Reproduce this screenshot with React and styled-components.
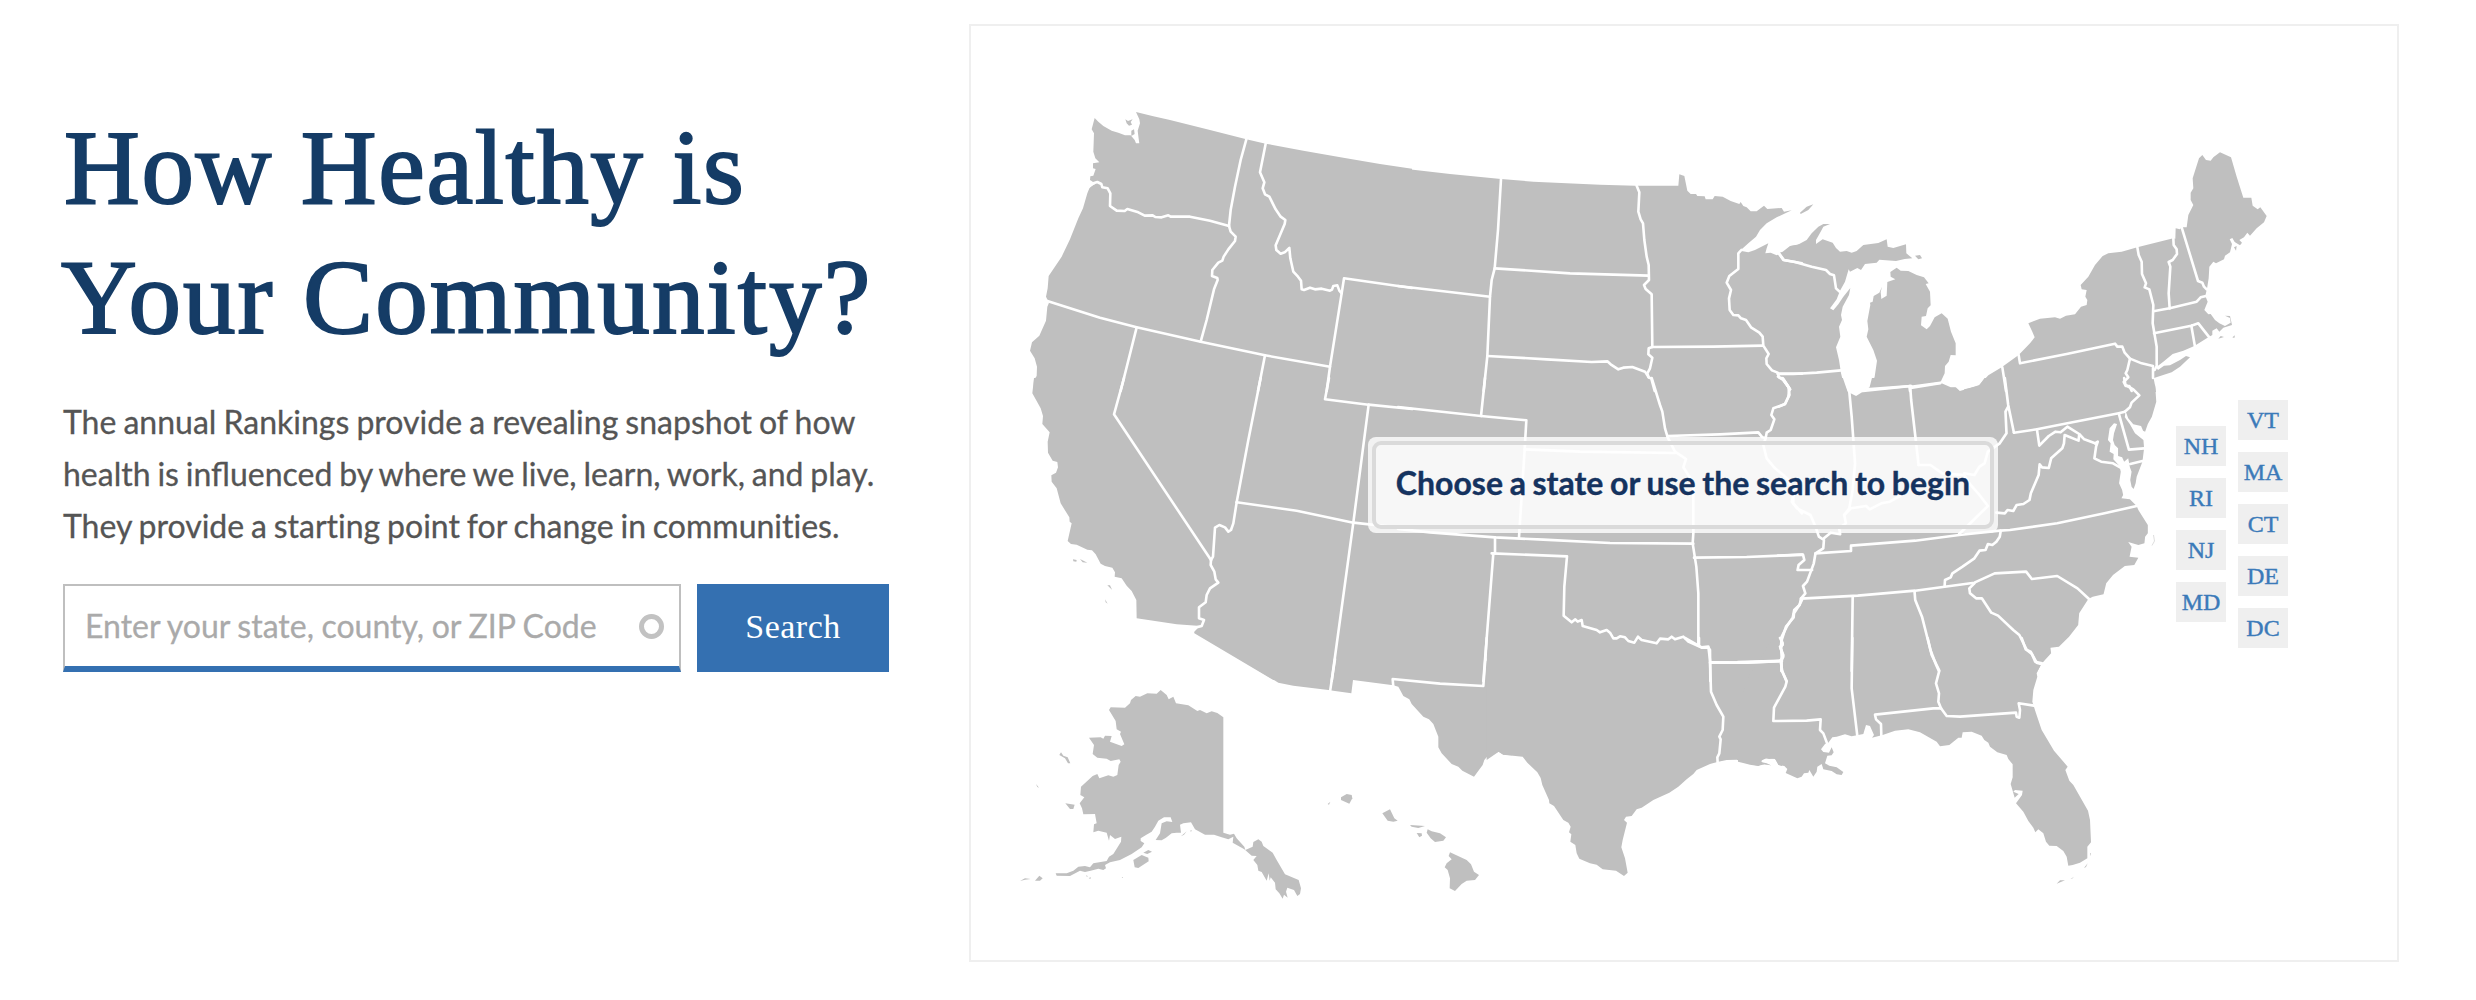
import React from 'react';
import styled, { createGlobalStyle } from 'styled-components';

const GlobalStyle = createGlobalStyle`
  * { box-sizing: border-box; }
  body { margin: 0; background: #fff; }
`;

const sans = "Lato, 'Open Sans', sans-serif";
const serif = "'Liberation Serif', 'Times New Roman', serif";

const Page = styled.main`
  display: flex;
  align-items: flex-start;
  width: 2476px;
  height: 1000px;
  overflow: hidden;
  background: #fff;
`;

const Intro = styled.section`
  flex: none;
  width: 906px;
  margin: 103px 0 0 63px;
`;

const Title = styled.h1`
  margin: 0;
  font: 400 105px/130px ${serif};
  color: #153c66;
  -webkit-text-stroke: 2px #153c66;
  white-space: nowrap;
`;

const TitleLine = styled.span`
  display: block;
  margin-left: ${(p) => p.$shift || 0}px;
  letter-spacing: ${(p) => p.$track || 0}px;
`;

const Lead = styled.p`
  margin: 33px 0 0;
  font: 400 32px/52px ${sans};
  color: #555;
  -webkit-text-stroke: 0.3px #555;
  white-space: nowrap;
`;

const LeadLine = styled.span`
  display: block;
  word-spacing: ${(p) => p.$gap || 0}px;
  font-variant-ligatures: ${(p) => (p.$plain ? 'none' : 'normal')};
`;

const SearchForm = styled.form`
  display: flex;
  gap: 16px;
  margin-top: 32px;
`;

const Field = styled.label`
  display: flex;
  align-items: center;
  justify-content: space-between;
  width: 618px;
  height: 88px;
  padding: 0 15px 0 20px;
  border: 2px solid #bfbfbf;
  border-bottom: 6px solid #3470b1;
  background: #fff;
`;

const Input = styled.input`
  width: 540px;
  padding: 0;
  border: 0;
  outline: 0;
  background: none;
  font: 400 32px/44px ${sans};
  color: #555;
  word-spacing: -0.6px;
  &::placeholder {
    color: #aaa;
    opacity: 1;
    -webkit-text-stroke: 0.3px #aaa;
  }
`;

const Ring = styled.span`
  width: 25px;
  height: 25px;
  border: 5px solid #c2c2c2;
  border-radius: 50%;
`;

const Submit = styled.button`
  width: 192px;
  height: 88px;
  padding: 0 0 2px;
  border: 0;
  background: #3470b1;
  color: #fff;
  font: 400 34px/1 ${serif};
  letter-spacing: 0.5px;
`;

const MapPanel = styled.section`
  position: relative;
  flex: none;
  width: 1430px;
  height: 938px;
  margin-top: 24px;
  border: 2px solid #efefef;
`;

const MapSvg = styled.svg`
  display: block;
  width: 1426px;
  height: 934px;
`;

const Hint = styled.div`
  position: absolute;
  left: 397px;
  top: 411px;
  width: 630px;
  height: 96px;
  padding: 4px;
  border-radius: 8px;
  background: rgba(255, 255, 255, 0.8);
`;

const HintInner = styled.div`
  display: flex;
  align-items: center;
  justify-content: center;
  height: 100%;
  padding-bottom: 4px;
  border: 4px solid #dadada;
  border-radius: 9px;
  background: rgba(255, 255, 255, 0.4);
  font: 700 32px/40px ${sans};
  word-spacing: -1.1px;
  color: #15335f;
  -webkit-text-stroke: 0.4px #15335f;
  white-space: nowrap;
`;

const SmallStates = styled.nav`
  position: absolute;
  left: 1205px;
  top: 374px;
  display: flex;
  gap: 12px;
`;

const StateColumn = styled.div`
  display: flex;
  flex-direction: column;
  gap: 12px;
  padding-top: ${(p) => p.$drop || 0}px;
`;

const StateLink = styled.a`
  width: 50px;
  height: 40px;
  background: #efefef;
  color: #3b7ab9;
  font: 400 24px/41px ${serif};
  -webkit-text-stroke: 0.4px #3b7ab9;
  text-align: center;
`;

// The map is split into sheets. Each has its own origin on the page and is
// drawn at three units to the pixel (kx differs on the mid-Atlantic sheet).
const sheets = [
  {
    x: 1010, y: 90,
    land: [
      'M254,84 265,95 280,108 305,122 325,128 345,136 362,136 374,150 378,160 388,160 386,146 383,122 390,100 388,88 378,66 430,79 480,90 600,120 709,148 767,161 880,182 1000,203 1110,222 1206,236 V906 H70 L72,870 80,858 81,830 74,805 60,782 66,757 88,737 108,692 112,650 117,638 108,620 113,595 116,558 155,500 180,448 205,385 219,355 232,310 240,290 256,282 246,274 240,270 241,259 250,257 257,237 249,235 249,220 268,217 256,205 250,185 252,130 245,118Z',
      'M346,88 354,93 368,88 362,96 366,104 357,107 350,100Z', 'M364,122 372,118 374,132 364,138Z',
    ],
    borders: [
      '236,291 250,280 262,276 274,282 277,292 293,295 301,310 300,348 320,362 344,363 352,357 385,367 404,377 428,376 436,381 455,382 475,376 482,380 540,380 600,392 657,408',
      '709,148 692,210 675,290 662,360 657,408',
      '657,408 662,425 677,440 675,453 655,478 641,500 637,512 625,518 607,540 606,558 622,564 623,570 612,598 590,690 572,755',
      '767,161 750,247 763,277 758,295 765,313 778,320 797,358 812,380 826,390 824,402 797,466 799,480 812,491 824,487 838,474 841,505 850,545 864,560 873,572 875,598 882,600 900,593 915,598 935,596 960,602 966,599 970,588 982,586 988,602 995,610',
      '1206,594 1002,565 995,610 960,830 950,903',
      '112,633 270,683 380,712 572,755 765,796 960,830', '380,712 332,903', '765,796 744,903',
    ],
  },
  {
    x: 1400, y: 90,
    land: ['M-6,234 150,252 303,267 400,275 500,280 600,284 705,287 835,287 838,253 853,258 862,302 872,312 888,312 892,318 914,319 917,328 938,328 944,318 968,320 992,333 1018,342 1022,336 1030,348 1040,352 1052,364 1070,364 1092,347 1102,357 1145,354 1152,365 1175,361 1130,382 1100,400 1080,420 1068,440 1045,460 1020,482 1045,487 1065,480 1105,460 1100,475 1096,490 1112,488 1130,496 1155,484 1172,468 1206,461 V906 H-6Z'],
    borders: [
      '-6,588 130,604 270,620', '303,267 294,420 284,535 275,570 270,620 262,798 251,903',
      '284,535 510,550 745,557',
      '710,287 718,307 715,365 722,388 729,400 733,450 740,500 746,525 747,570 732,585 737,597 755,613 757,770',
      '757,771 940,770 1088,767',
      '262,798 440,808 575,816 622,814 632,823 655,838 670,833 697,831 735,845 746,862 754,866 764,903',
      '757,771 746,775 745,793 757,803 750,835 742,850 746,862',
      '1024,480 1015,490 1015,537 988,558 980,578 993,600 987,625 989,660 1000,675 1015,676 1023,685 1038,690 1053,712 1078,728 1088,740 1090,767 1106,792 1099,805 1100,822 1116,841 1133,848 1137,862 1150,870 1170,898',
      '1133,851 1206,851', '1137,490 1152,510 1206,520',
    ],
  },
  {
    x: 1780, y: 90,
    land: [
      'M-6,490 8,485 30,468 52,465 80,450 95,430 115,410 130,402 150,402 130,410 122,425 108,450 108,462 128,448 158,458 168,474 180,485 200,483 215,488 230,483 250,465 295,459 320,448 323,470 340,474 378,463 379,490 397,505 374,507 348,513 298,509 290,518 255,522 243,540 232,534 210,545 206,538 195,575 180,602 170,628 158,644 150,655 160,661 175,643 190,620 211,594 207,615 188,650 183,675 186,690 177,710 181,740 168,772 177,810 183,850 188,870 202,906 H-6Z',
      'M405,497 420,495 426,505 415,508Z', 'M60,368 80,350 100,343 85,360 62,372Z',
      'M350,533 362,542 385,543 410,555 432,562 446,580 437,582 450,605 452,646 443,655 438,678 425,680 423,706 440,718 450,708 464,682 485,670 503,686 513,725 527,760 527,796 512,795 506,815 495,828 494,850 480,880 500,894 525,893 535,906 H262 L273,890 284,860 291,812 280,780 260,740 265,718 262,693 271,645 270,638 278,635 281,618 298,608 306,590 302,606 304,627 320,617 322,576 346,568 332,560 331,546Z',
      'M548,906 553,898 595,888 625,856 665,832 716,795 750,760 764,742 757,725 745,700 780,686 825,682 840,686 858,677 885,673 903,650 920,645 922,630 916,620 920,600 905,598 902,585 925,560 945,525 968,498 985,490 1025,485 1072,472 1180,445 1186,446 1187,415 1200,418 1205,412 1220,412 1225,375 1240,345 1232,330 1232,308 1240,295 1238,265 1257,205 1267,195 1278,210 1292,212 1300,202 1320,187 1353,202 1370,260 1390,323 1414,323 1418,347 1433,358 1441,352 1460,378 1452,397 1430,415 1410,437 1402,428 1392,442 1378,450 1386,458 1380,466 1364,456 1357,444 1349,448 1356,462 1350,487 1335,497 1332,508 1308,520 1300,515 1288,530 1286,565 1282,590 1276,618 1283,635 1273,660 1285,673 1292,672 1305,690 1318,700 1335,708 1352,698 1350,684 1335,677 1350,678 1356,705 1330,713 1318,725 1310,715 1297,722 1297,735 1285,742 1243,768 1210,782 1178,792 1150,815 1128,832 1134,840 1152,827 1170,826 1200,810 1218,798 1230,802 1200,830 1175,847 1122,864 1119,870 1105,882 1125,884 1128,906Z',
      'M1315,746 1322,738 1332,741Z', 'M1357,742 1365,736 1363,744Z', 'M1362,472 1370,468 1368,482Z',
    ],
    borders: [
      '-6,487 10,510 45,516 95,530 138,540 150,552 162,556 168,595 180,606',
      '-6,852 40,852 110,848 183,841', '-6,860 10,868 30,898',
      '260,898 392,888', '388,888 390,903', '392,894 480,880', '667,832 678,903',
      '716,795 720,820 860,792 1005,761 1012,770 1027,770 1034,788 1050,806 1085,820 1119,828 1119,864',
      '1050,806 1042,840 1037,850 1045,862 1031,876 1037,888 1048,888 1055,903',
      '1072,472 1076,495 1085,515 1086,552 1098,580 1094,592 1108,598 1120,645 1118,700 1130,770 1130,828 1124,840',
      '1180,445 1181,465 1190,478 1191,492 1178,510 1166,516 1171,530 1166,610 1169,655',
      '1205,412 1254,573 1267,578 1272,590 1280,598',
      '1120,664 1169,655 1250,635 1262,622 1278,618', '1122,730 1234,707 1255,700 1288,742', '1234,707 1245,770',
    ],
  },
  {
    x: 1010, y: 380,
    land: [
      'M72,-6 67,40 92,85 99,108 97,132 119,157 113,185 114,218 128,242 142,246 144,262 138,278 124,286 125,305 140,325 152,370 178,412 179,425 185,430 173,483 183,492 200,494 232,509 246,511 257,523 272,551 285,558 307,563 315,577 314,590 335,595 350,617 365,633 379,660 380,715 500,733 572,738 552,752 553,760 790,900 H1206 V-6Z',
      'M189,538 200,540 199,545 190,544Z', 'M210,537 232,548 218,547Z', 'M292,616 300,616 306,629Z', 'M285,658 293,671 287,667Z',
    ],
    borders: [
      '342,-6 312,103 603,540', '603,540 609,530 615,443 628,435 645,442 655,455 663,450 670,430 680,367',
      '752,-6 715,180 680,367', '680,367 860,392 1030,428 1206,447', '957,-6 945,58 1075,74 1206,87',
      '1076,74 1030,428 965,903',
      '603,540 602,555 613,575 617,598 625,608 600,625 590,645 587,667 567,682 567,715 582,720 575,738 560,742 550,753',
    ],
  },
  {
    x: 1400, y: 380,
    land: ['M-6,-6 H1206 V906 H-6Z'],
    borders: [
      '-6,81 243,108 379,121 374,208 357,472', '255,-6 243,108', '374,208 540,215 825,219',
      '755,-6 780,75 787,95 795,145 803,172 825,215 858,237 850,262 865,285 880,310 880,460 878,490 889,560 895,640 895,795',
      '803,168 960,163 1075,157 1087,172 1097,174',
      '1145,-6 1168,25 1165,50 1155,72 1120,85 1114,105 1123,118 1112,150 1100,158 1097,174 1090,195 1100,235 1125,265 1150,285 1165,300 1180,340 1180,370 1206,400',
      '-6,447 90,457 285,472 430,479 630,489 880,491', '285,472 285,520',
      '275,520 501,529 493,620 491,707 515,727 526,718 533,725 545,720 548,738 590,750 600,757 620,750 630,758 640,775 650,775 660,769 675,772 685,783 703,788 714,770 725,780 770,790 780,776 805,778 815,770 825,778 850,770 865,785 905,803 925,802 930,810 931,903',
      '280,520 250,903', '882,533 1040,531 1206,524', '931,847 1040,848 1145,843',
      '1206,660 1200,672 1182,700 1181,712 1158,740 1145,780 1148,795 1140,800 1150,830 1143,845 1145,870 1160,903',
    ],
  },
  {
    x: 1780, y: 380, kx: 2.958,
    land: ['M-6,-6 H186 L200,35 225,48 245,35 265,22 272,-6 H470 L478,10 505,22 520,22 532,33 560,25 590,15 605,-6 H1105 L1110,20 1113,65 1100,110 1088,132 1080,155 1074,152 1068,138 1045,133 1030,115 1022,92 1020,112 1035,133 1050,160 1075,180 1077,205 1072,245 1055,290 1052,310 1046,327 1040,320 1036,300 1040,275 1035,262 1030,235 1018,245 1012,232 1000,228 1000,205 990,195 985,180 988,160 997,132 988,130 975,145 970,180 978,190 975,215 987,222 986,238 1004,258 1008,275 1003,310 1012,330 1015,345 1010,355 1035,358 1055,378 1060,390 1088,435 1088,460 1080,470 1078,490 1060,495 1030,486 1040,500 1034,530 1060,533 1048,555 1020,558 985,585 965,610 957,643 925,650 912,657 885,700 882,735 855,770 825,800 800,803 802,820 775,850 760,876 H-6Z'],
    borders: [
      '205,35 212,110 222,250 215,330 205,385 190,405', '245,33 388,18', '385,18 388,60 410,255', '388,20 475,8',
      '8,-6 25,20 28,45 15,72 -3,80', '665,-6 675,75 692,158', '692,158 760,148 850,130 1002,100 1020,95',
      '1018,-6 1022,15 1045,28 1063,46 1040,68 1035,82 1020,95', '1002,100 1032,209 1077,205', '1036,252 1072,243',
      '675,80 667,95 670,160 650,190 615,215 605,250 590,260 575,285 545,280', '410,255 445,255 480,280 545,285 560,310',
      '190,405 210,385 255,378 265,388 300,370 325,365 360,345 410,310', '560,310 590,345 615,378 530,462',
      '760,148 767,197 795,168 815,155 830,157 850,140 885,162 900,178 932,190',
      '640,398 665,400 673,390 690,393 700,375 720,372 738,360 742,340 765,285 768,253 775,262 795,264 802,235 835,205 840,190 842,165 883,182 885,165',
      '932,190 940,185 935,200 930,235 950,245 985,250 1006,262',
      '105,520 210,513 210,497 400,482 530,465 650,452 680,450 820,430 960,400 1055,378',
      '653,452 650,470 640,485 628,495 615,492 608,510 590,512 575,535 540,560 510,580 505,592 488,600 487,618',
      '62,656 230,647 400,632 487,620 575,608 635,580 728,575 745,597 820,588 880,625 914,657',
      '575,610 560,625 562,640 580,655 597,655 625,698 645,707 690,750 708,765 730,810 745,822 755,845 775,850',
      '398,635 400,660 420,710 445,810 462,855 470,873', '215,650 212,873',
      '40,340 35,365 50,385 90,405 105,440 115,470 130,480 128,505 105,520 100,550 80,605 68,618 75,640 62,656 58,675 42,690 38,712 20,740 5,770 3,800 5,830 4,873',
      '190,405 195,430 175,445 178,463 150,458 130,475', '-6,527 68,524 72,540 55,555 52,570 95,570',
    ],
  },
  {
    x: 1010, y: 660,
    land: [
      'M690,-2 805,68 850,77 955,90 975,93 1024,100 1029,60 1150,76 1165,80 1180,108 1198,118 1205,132 1240,170 1257,178 1270,192 1285,230 1285,262 1295,280 1325,312 1345,320 1357,332 1392,350 1418,315 1423,300 1433,288 1466,275 1480,284 1506,286 V-6 H685Z',
      'M452,90 470,105 476,118 490,110 498,130 535,136 562,153 570,150 590,160 605,154 622,159 640,172 V518 L660,524 672,521 680,535 703,560 706,570 728,560 730,546 745,538 755,545 760,558 788,578 800,600 825,643 866,660 873,685 870,702 862,708 852,690 832,683 828,695 833,713 822,704 818,716 808,700 797,688 795,668 782,652 779,662 776,640 770,662 755,636 745,632 742,615 730,600 740,588 725,587 703,568 668,548 670,530 655,538 635,532 612,524 585,524 555,508 543,487 520,490 510,494 513,518 500,518 485,520 468,533 455,541 437,540 450,520 455,490 470,484 487,486 482,472 462,472 445,482 435,500 425,515 408,525 392,535 392,543 403,550 395,562 365,582 330,600 300,607 285,615 288,625 280,630 265,626 242,632 225,636 210,632 180,648 140,647 137,640 170,640 190,632 205,620 225,618 240,622 250,610 290,603 297,590 310,582 333,545 334,530 315,537 300,525 297,542 290,518 265,512 250,517 252,493 260,490 255,462 220,463 216,445 209,430 223,412 211,405 213,380 248,348 262,342 268,355 295,346 310,350 322,345 326,315 332,305 328,298 302,303 290,296 262,293 248,282 252,255 237,233 272,232 280,236 285,227 305,228 300,245 335,258 343,253 330,222 333,215 320,208 317,183 297,150 302,142 345,143 360,130 363,120 377,108 390,110 412,100 440,101Z',
      'M370,600 395,585 415,593 416,604 385,624 374,622Z', 'M400,578 415,570 426,575 412,582Z',
      'M166,430 194,434 190,447 180,447Z', 'M148,285 153,277 160,287 173,292 181,310 174,310 165,295Z',
      'M78,372 87,383 82,381Z', 'M30,663 45,655 62,657 45,659Z', 'M75,662 88,647 98,655 90,662Z',
      'M228,646 233,648 231,651Z', 'M236,654 243,652 241,657Z', 'M335,651 339,651 338,654Z', 'M513,529 530,514 522,524Z', 'M540,512 546,511 543,515Z',
      'M993,412 1010,402 1025,405 1027,415 1018,431 993,420Z', 'M953,432 961,425 957,434Z',
      'M1117,460 1140,448 1153,475 1163,482 1150,485 1133,482Z', 'M1200,495 1245,498 1225,504 1205,500Z',
      'M1220,519 1235,520 1236,527 1228,532Z', 'M1253,508 1265,514 1290,520 1308,532 1300,542 1275,546 1262,535 1250,518Z',
      'M1320,577 1370,600 1383,613 1392,635 1407,645 1395,660 1370,662 1355,672 1335,693 1319,685 1320,655 1313,630 1304,622 1310,610 1325,598 1316,588Z',
    ],
    borders: ['975,-3 960,95', '1150,82 1148,57 1290,71 1420,78 1426,-3'],
  },
  {
    x: 1380, y: 640,
    land: ['M320,-6 320,360 356,335 370,344 428,350 442,368 472,397 482,414 487,435 507,480 508,490 522,498 550,540 565,548 572,560 567,577 574,583 571,605 586,615 590,640 598,656 630,670 650,674 668,688 708,692 732,708 743,698 735,655 724,622 728,600 741,548 732,540 738,530 755,528 770,508 785,503 820,480 868,458 895,440 920,418 940,402 950,390 990,372 1015,365 1040,360 1070,359 1110,372 1135,377 1158,372 1175,376 1150,372 1143,362 1160,354 1185,357 1197,375 1206,378 V-6Z'],
    borders: [
      '316,60 320,-6', '957,-6 957,15', '915,-6 965,22 985,20 990,60 993,155 1010,195 1030,230 1028,270 1018,290 1022,298 1018,340 1012,352 1013,368',
      '990,68 1080,68 1206,63',
    ],
  },
  {
    x: 1740, y: 640,
    land: [
      'M100,-6 30,100 -6,200 V365 L30,374 55,378 65,372 92,376 80,370 62,366 70,354 88,357 105,355 115,375 133,378 142,387 137,399 172,415 185,410 192,400 205,398 208,390 220,410 230,395 232,380 245,372 250,388 275,393 290,403 305,405 310,396 290,382 268,377 255,370 262,347 275,346 281,337 275,322 267,338 250,336 243,328 255,312 265,308 277,292 290,290 315,283 335,289 370,282 378,255 390,258 402,285 396,293 428,285 465,272 505,268 540,277 590,305 600,319 628,315 655,293 665,293 668,277 695,275 725,287 733,300 745,308 750,320 772,337 800,345 805,357 818,373 818,412 812,432 824,473 836,462 820,455 825,450 848,452 846,465 828,490 850,515 865,543 880,563 886,577 895,568 910,580 918,605 928,617 950,618 970,633 980,650 985,677 998,675 1020,668 1042,655 1042,620 1053,607 1050,540 1044,512 1000,435 988,422 976,390 983,380 942,332 905,270 888,220 877,185 880,150 892,110 890,100 903,73 930,38 928,22 940,20 965,0 970,-6Z',
      'M950,731 960,721 975,721Z', 'M992,717 1002,710 996,716Z', 'M1032,684 1043,670 1038,681Z', 'M1050,640 1053,640 1052,648Z',
    ],
    borders: [
      '120,-6 128,10 122,25 130,45 122,62 127,95 140,125 136,140 102,203 100,243 200,242 242,238 240,270 250,280 262,312',
      '-6,66 122,62', '337,-6 335,145 352,288', '563,-6 575,45 598,92 588,130 597,160 595,185 603,205',
      '603,205 580,205 405,224 408,238 423,252 424,288', '603,205 620,228 660,230 828,218 830,230 838,233 840,210 836,190 882,197',
      '845,-6 857,28 872,35 890,68 903,72',
    ],
  },
];

const place = (s) => `translate(${s.x} ${s.y}) scale(${1 / (s.kx || 3)} ${1 / 3})`;

function UsMap() {
  return (
    <MapSvg viewBox="971 26 1426 934" role="img" aria-label="Map of the United States">
      <g fill="#bfbfbf">
        {sheets.map((s, i) => (
          <g key={i} transform={place(s)}>
            {s.land.map((d) => <path key={d} d={d} />)}
          </g>
        ))}
      </g>
      <path d="M2153.500 535 L2154.500 541 L2152 545.500" fill="none" stroke="#d5d5d5" strokeWidth=".8" />
      <g fill="none" stroke="#fff" strokeWidth="7.800" strokeLinejoin="round" strokeLinecap="round">
        {sheets.map((s, i) => (
          <g key={i} transform={place(s)}>
            {s.borders.map((pts) => <polyline key={pts} points={pts} />)}
          </g>
        ))}
      </g>
    </MapSvg>
  );
}

export default function App() {
  return (
    <Page>
      <GlobalStyle />
      <Intro>
        <Title>
          <TitleLine $shift={1} $track={1.6}>How Healthy is</TitleLine>
          <TitleLine $shift={-2} $track={2.1}>Your Community?</TitleLine>
        </Title>
        <Lead>
          <LeadLine $gap={-1.1}>The annual Rankings provide a revealing snapshot of how</LeadLine>
          <LeadLine $gap={-1.35}>health is influenced by where we live, learn, work, and play.</LeadLine>
          <LeadLine $gap={-1.35} $plain>They provide a starting point for change in communities.</LeadLine>
        </Lead>
        <SearchForm onSubmit={(e) => e.preventDefault()}>
          <Field>
            <Input placeholder="Enter your state, county, or ZIP Code" />
            <Ring />
          </Field>
          <Submit>Search</Submit>
        </SearchForm>
      </Intro>
      <MapPanel>
        <UsMap />
        <Hint>
          <HintInner>Choose a state or use the search to begin</HintInner>
        </Hint>
        <SmallStates>
          <StateColumn $drop={26}>
            {['NH', 'RI', 'NJ', 'MD'].map((s) => <StateLink key={s}>{s}</StateLink>)}
          </StateColumn>
          <StateColumn>
            {['VT', 'MA', 'CT', 'DE', 'DC'].map((s) => <StateLink key={s}>{s}</StateLink>)}
          </StateColumn>
        </SmallStates>
      </MapPanel>
    </Page>
  );
}
